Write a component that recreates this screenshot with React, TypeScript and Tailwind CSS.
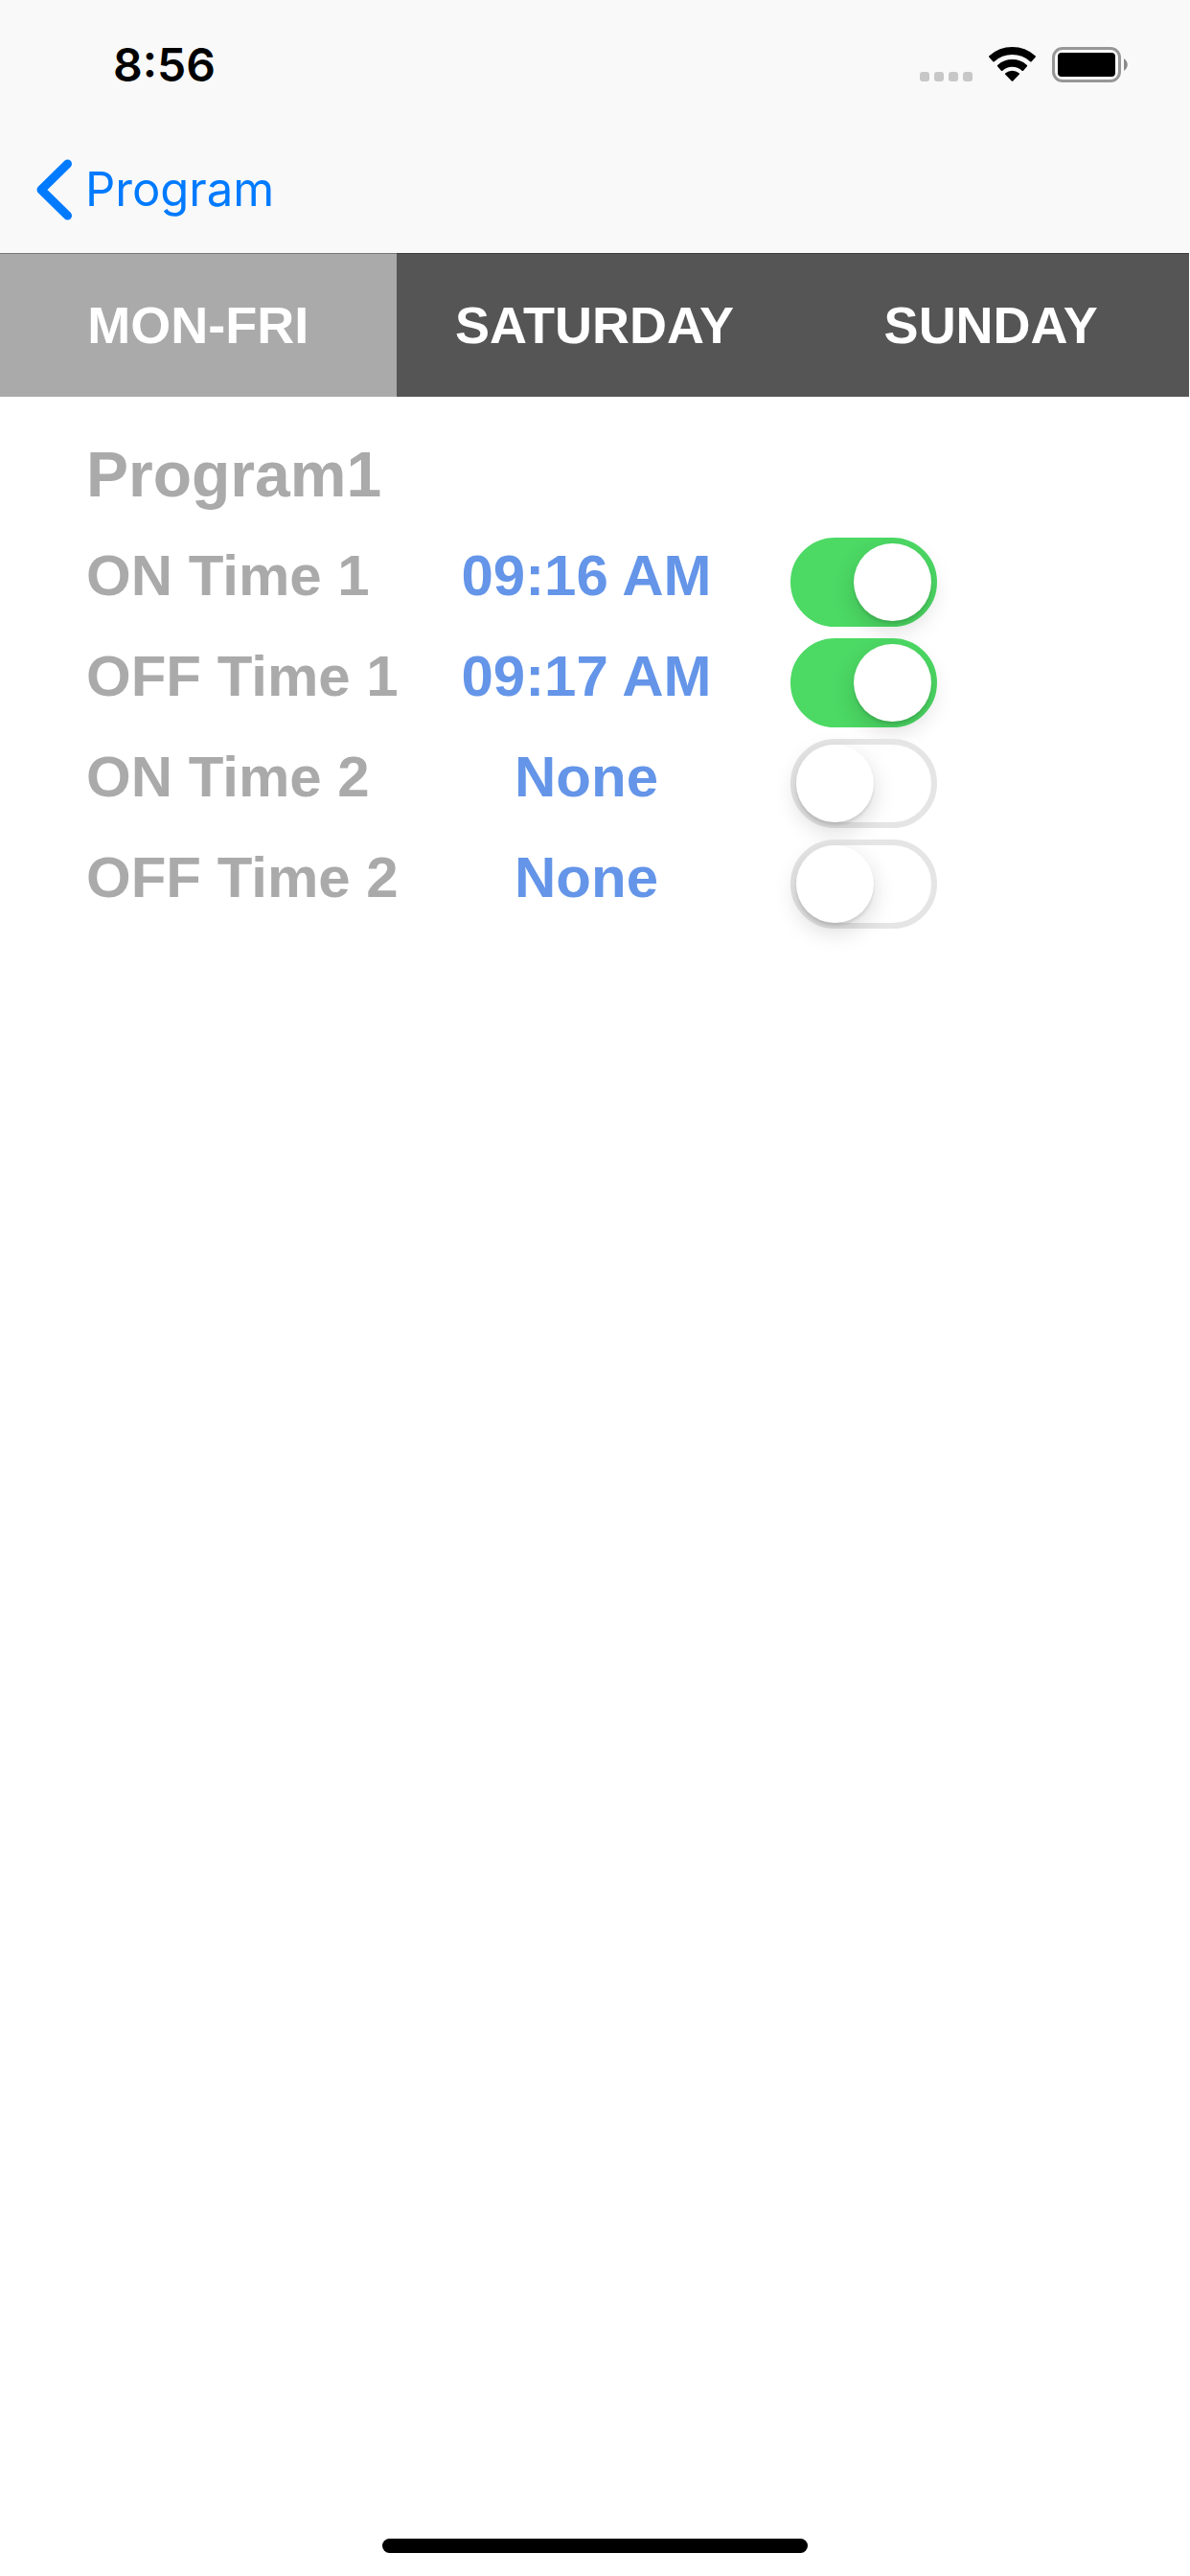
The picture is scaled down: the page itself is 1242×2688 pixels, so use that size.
import { useState } from "react";
import clsx from "clsx";

const DAYS = ["MON-FRI", "SATURDAY", "SUNDAY"];

const TIMERS = [
  { id: "on-1", label: "ON Time 1", time: "09:16 AM", enabled: true },
  { id: "off-1", label: "OFF Time 1", time: "09:17 AM", enabled: true },
  { id: "on-2", label: "ON Time 2", time: "None", enabled: false },
  { id: "off-2", label: "OFF Time 2", time: "None", enabled: false },
];

function StatusBar() {
  return (
    <div className="flex h-[135px] items-center justify-between pl-[118px] pr-[65px]">
      <span className="text-[48px] font-semibold text-black">8:56</span>
      <div className="flex items-center gap-[17px]">
        <svg width="55" height="37" viewBox="0 0 55 37" fill="#c7c7c7">
          <rect x="0" y="26" width="10" height="10" rx="3" />
          <rect x="15" y="26" width="10" height="10" rx="3" />
          <rect x="30" y="26" width="10" height="10" rx="3" />
          <rect x="45" y="26" width="10" height="10" rx="3" />
        </svg>
        <svg width="49" height="37" viewBox="0 0 49 37" stroke="#000" strokeWidth="2" strokeLinejoin="round">
          <path d="M1.1 10A35 35 0 0 1 47.9 10L43.9 14.5A29 29 0 0 0 5.1 14.5Z" />
          <path d="M9.8 19.7A22 22 0 0 1 39.2 19.7L35.3 24A16.2 16.2 0 0 0 13.7 24Z" />
          <path d="M18 28.1A10.3 10.3 0 0 1 31 28.1L24.5 34.8Z" />
        </svg>
        <svg width="79" height="37" viewBox="0 0 79 37">
          <rect x="1.5" y="1.5" width="69" height="34" rx="9.5" fill="none" stroke="#979797" strokeWidth="3" />
          <rect x="6" y="6" width="60" height="25" rx="4" />
          <path d="M75 12C80 15.5 80 21.5 75 25Z" fill="#8a8a8a" />
        </svg>
      </div>
    </div>
  );
}

function NavBar() {
  return (
    <nav className="flex h-[126px] items-center pl-[38px]">
      <a href="#program" className="flex items-center gap-[13px] text-[49px] text-[#007aff]">
        <svg width="38" height="64" viewBox="0 0 38 64" fill="none" stroke="currentColor" strokeWidth="9" strokeLinecap="round" strokeLinejoin="round">
          <path d="M32.5 5L5 32L32.5 59" />
        </svg>
        Program
      </a>
    </nav>
  );
}

function DayTabs() {
  const [day, setDay] = useState(DAYS[0]);

  return (
    <div className="grid grid-cols-3 pr-px">
      {DAYS.map((d) => (
        <button
          key={d}
          type="button"
          aria-pressed={d === day}
          onClick={() => setDay(d)}
          className={clsx(
            "h-[150px] border-t border-black/30 text-[54px] font-bold text-white",
            d === day ? "bg-[#aaaaaa]" : "bg-[#555555]"
          )}
        >
          {d}
        </button>
      ))}
    </div>
  );
}

function Switch({ id, on, onChange }: { id: string; on: boolean; onChange: () => void }) {
  return (
    <input
      id={id}
      type="checkbox"
      role="switch"
      checked={on}
      onChange={onChange}
      className="flex h-[93px] w-[153px] appearance-none rounded-full border-[6px] border-[#e5e5e5] bg-transparent before:size-[81px] before:rounded-full before:bg-white before:shadow-[0_9px_24px_rgba(0,0,0,0.15),0_3px_3px_rgba(0,0,0,0.1)] before:content-[''] checked:justify-end checked:border-[#4cd964] checked:bg-[#4cd964]"
    />
  );
}

export default function App() {
  const [timers, setTimers] = useState(TIMERS);

  const toggle = (id: string) =>
    setTimers(timers.map((t) => (t.id === id ? { ...t, enabled: !t.enabled } : t)));

  return (
    <div className="flex min-h-screen flex-col bg-white font-['Liberation_Sans',Arial,sans-serif]">
      <header className="bg-[#f9f9f9] pb-[3px] font-[Inter,sans-serif]">
        <StatusBar />
        <NavBar />
      </header>
      <DayTabs />
      <main className="flex-1 px-[90px] pt-9">
        <h1 className="mb-[21px] text-[66px] font-bold leading-[90px] text-[#aaaaaa]">Program1</h1>
        <div className="flex flex-col gap-3">
          {timers.map((t) => (
            <div key={t.id} className="grid grid-cols-[360px_324px_1fr] items-start text-[60px] font-bold leading-[80px]">
              <label htmlFor={t.id} className="text-[#aaaaaa]">
                {t.label}
              </label>
              <button type="button" className="text-[#6495e8]">
                {t.time}
              </button>
              <div className="pl-[51px]">
                <Switch id={t.id} on={t.enabled} onChange={() => toggle(t.id)} />
              </div>
            </div>
          ))}
        </div>
      </main>
      <footer className="flex justify-center pb-6">
        <div className="h-[15px] w-[444px] rounded-full bg-black" />
      </footer>
    </div>
  );
}
